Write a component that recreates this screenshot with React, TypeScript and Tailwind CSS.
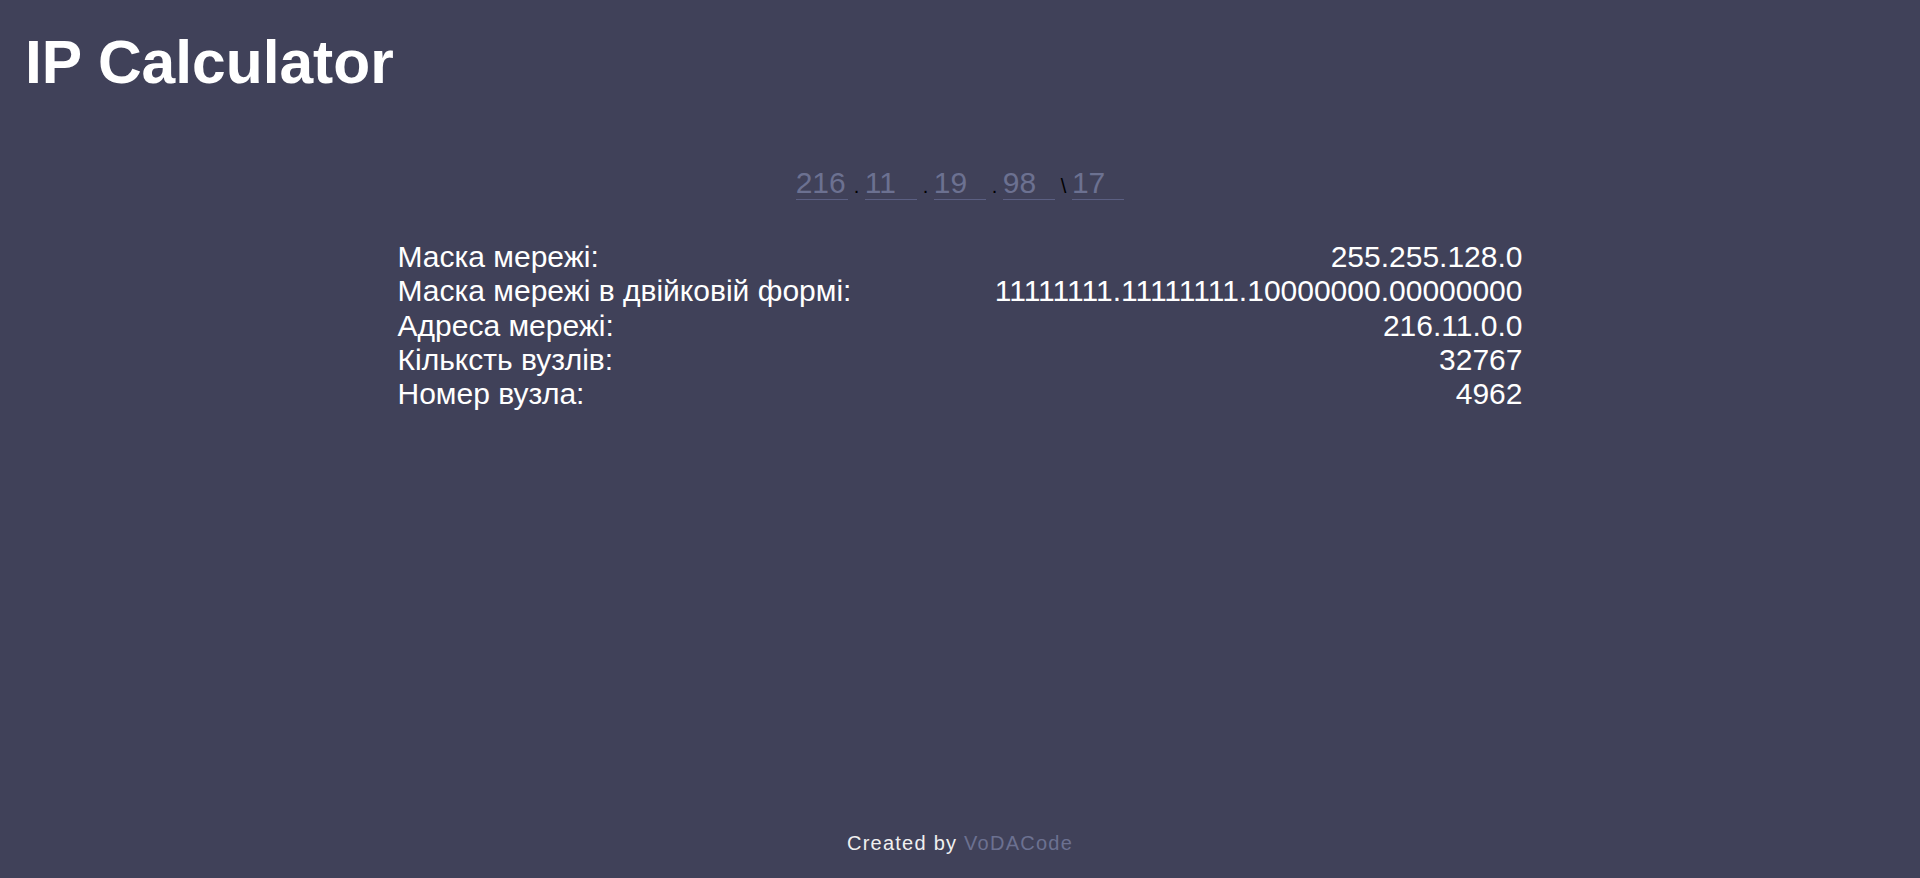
import React from "react";

const rows: [string, string][] = [
  ["Маска мережі:", "255.255.128.0"],
  ["Маска мережі в двійковій формі:", "11111111.11111111.10000000.00000000"],
  ["Адреса мережі:", "216.11.0.0"],
  ["Кільксть вузлів:", "32767"],
  ["Номер вузла:", "4962"],
];

function Octet({ value }: { value: string }) {
  return (
    <input
      readOnly
      value={value}
      className="w-[52.5px] bg-transparent border-0 border-b border-[#5b5f82] p-0 text-[30px] leading-[33px] text-[#6c7191] outline-none"
      style={{ fontFamily: '"Liberation Sans", Arial, sans-serif' }}
    />
  );
}

function Sep({ ch }: { ch: string }) {
  return <span className="text-[20px] text-black mx-[5.5px] leading-none">{ch}</span>;
}

export default function App() {
  return (
    <div
      className="min-h-screen w-full bg-[#404159] flex flex-col text-white"
      style={{ fontFamily: '"Liberation Sans", Arial, sans-serif' }}
    >
      <h1 className="pt-8 pl-[25px] text-[60.5px] leading-none font-bold text-white">IP Calculator</h1>

      <div className="mt-[73.5px] flex justify-center items-baseline">
        <Octet value="216" />
        <Sep ch="." />
        <Octet value="11" />
        <Sep ch="." />
        <Octet value="19" />
        <Sep ch="." />
        <Octet value="98" />
        <Sep ch="\" />
        <Octet value="17" />
      </div>

      <div className="mt-[40px] w-[1125px] mx-auto flex flex-col">
        {rows.map(([k, v]) => (
          <div key={k} className="flex justify-between text-[30px] leading-[34.3px] text-white">
            <span>{k}</span>
            <span>{v}</span>
          </div>
        ))}
      </div>

      <div className="flex-1" />

      <footer className="pb-[20px] text-center text-[20px] tracking-[1.25px] text-[#f0f0f0]">
        Created by <span className="text-[#6c7191]">VoDACode</span>
      </footer>
    </div>
  );
}
